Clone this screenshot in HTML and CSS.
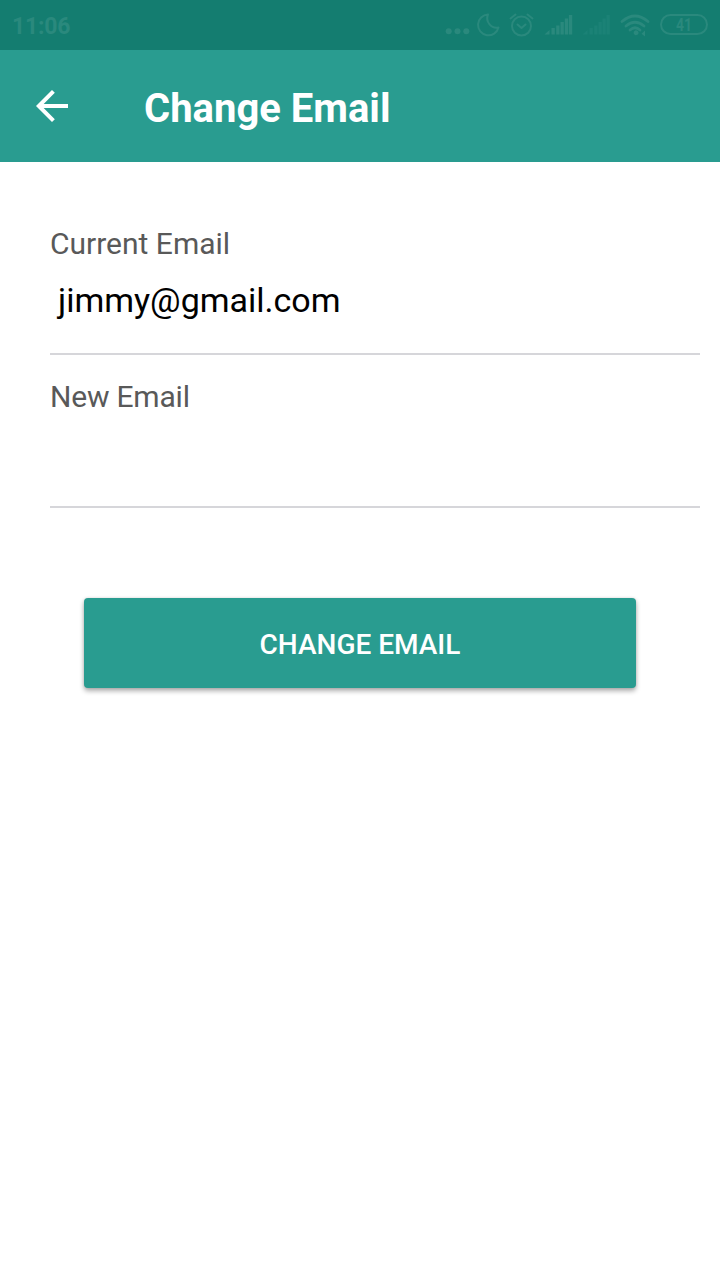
FILE: index.html
```html
<!DOCTYPE html>
<html lang="en">
<head>
<meta charset="utf-8">
<title>Change Email</title>
<link rel="stylesheet" href="styles.css">
</head>
<body>
<div class="status-bar">
  <span class="clock">11:06</span>
  <svg class="status-icons" width="270" height="50" viewBox="440 0 270 50" fill="none" stroke-linecap="round" stroke-linejoin="round">
    <g class="fill"><circle cx="448.700" cy="31.300" r="3"/><circle cx="457.500" cy="31.300" r="3"/><circle cx="466.300" cy="31.300" r="3"/></g>
    <path class="line" d="M488 14.500A10.400 10.400 0 1 0 498.500 27.500A9.500 9.500 0 0 1 488 14.500Z"/>
    <g class="line"><circle cx="521.500" cy="26" r="9.500"/><path d="M517.500 24.500l4 3.500 4-3.500M510.500 18.500l5-4M532.500 18.500l-5-4"/></g>
    <path class="fill" d="M544.500 34.500l5-4.500v4.500zM551.500 28h3.300v6.500h-3.300zM556.200 25.500h3.300v9h-3.300zM560.500 22h3.300v12.500h-3.300zM564.800 18.500h3.300v16h-3.300zM568.900 15h3.300v19.500h-3.300z"/>
    <path class="fill faint" d="M582.500 34.500l5-4.500v4.500zM589.500 28h3.300v6.500h-3.300zM594.200 25.500h3.300v9h-3.300zM598.500 22h3.300v12.500h-3.300zM602.500 18.500h3.300v16h-3.300zM606.500 15h3.300v19.500h-3.300z"/>
    <g class="wifi"><path d="M622 21.500Q635 10.500 648 21.500M626 26Q635 18.500 644 26M630 30Q635 25.500 640 30"/></g>
    <path class="fill" d="M635 30.500a2.500 2.500 0 1 1 0 4.500a2.500 2.500 0 0 1 0-4.500zM645 30.500v6l-3.500-2.700z"/>
    <rect class="line" x="661" y="15" width="46" height="19" rx="9.500"/>
    <text class="battery" x="684" y="30.800" textLength="16" lengthAdjust="spacingAndGlyphs">41</text>
  </svg>
</div>
<header class="app-bar">
  <svg class="back" width="32" height="32" viewBox="0 0 32 32" fill="none" stroke="#fff" stroke-width="4"><path d="M32 16H4M17.400 1.400L2.800 16L17.400 30.600"/></svg>
  <h1 class="title">Change Email</h1>
</header>
<main class="form">
  <div class="field"><div class="label">Current Email</div><div class="value">jimmy@gmail.com</div></div>
  <div class="field"><div class="label label-new">New Email</div><div class="value"></div></div>
  <button class="submit">CHANGE EMAIL</button>
</main>
</body>
</html>
```
FILE: styles.css
```css
* { box-sizing: border-box; }
body { margin: 0; min-height: 1280px; background: #fff; font-family: Roboto, sans-serif; }
.status-bar { display: flex; justify-content: space-between; height: 50px; padding: 0 10px 0 12px; background: #147d70; }
.clock { font-size: 23px; font-weight: 700; line-height: 54px; letter-spacing: -0.2px; color: #2a897d; }
.status-icons { display: block; }
.fill { fill: #2a897d; }
.faint { fill: #1b8276; }
.line { stroke: #2a897d; stroke-width: 2; }
.wifi { stroke: #2a897d; stroke-width: 2.8; }
.battery { fill: #2a897d; font-size: 18px; font-weight: 700; text-anchor: middle; }
.app-bar { display: flex; align-items: center; height: 112px; padding: 0 36px; background: #299c90; }
.back { display: block; flex: none; }
.title { margin: 6px 0 0 76px; font-size: 40px; font-weight: 700; line-height: 48px; color: #fff; }
.form { display: flex; flex-direction: column; padding: 40px 20px 40px 50px; }
.field { height: 153px; padding-top: 24px; border-bottom: 2px solid #d6d6da; }
.label { font-size: 30px; line-height: 36px; color: #595959; }
.label-new { letter-spacing: -0.2px; }
.value { padding: 18px 0 0 8px; font-size: 34px; line-height: 40px; color: #000; }
.submit { width: 552px; height: 90px; margin: 90px 0 0 34px; padding: 3px 0 0; border: 0; border-radius: 4px; background: #299c90; box-shadow: 0 3px 5px rgba(0,0,0,.32), 0 0 3px rgba(0,0,0,.12); font: 500 28px/34px Roboto, sans-serif; color: #fff; }
```
